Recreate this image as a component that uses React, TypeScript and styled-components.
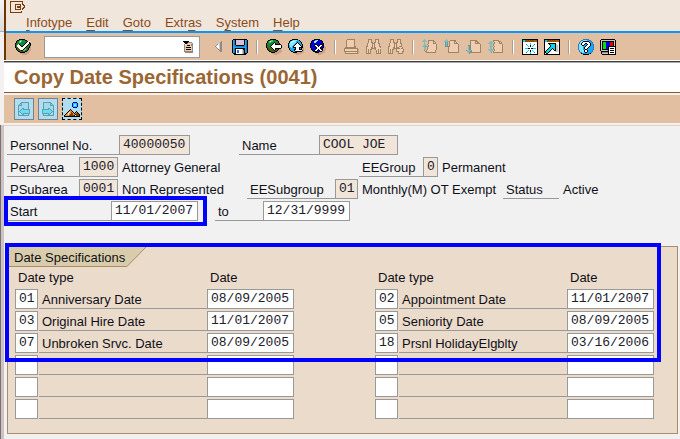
import React from 'react';
import styled, { createGlobalStyle } from 'styled-components';

const sans = '"Liberation Sans", Arial, sans-serif';
const mono = '"Liberation Mono", "Courier New", monospace';

const Global = createGlobalStyle`
  *, *::before, *::after { box-sizing: border-box; }
  body { margin: 0; background: #f1f1f1; font: 13px/20px ${sans}; color: #101018; }
  button, input { font: inherit; color: inherit; margin: 0; padding: 0; border: 0; border-radius: 0; background: none; }
`;

/* ---------- pixel icons ---------- */

const palette: Record<string, string> = {
  k: '#000000', w: '#ffffff', G: '#108838', L: '#4cc468', D: '#4a5a10', s: '#cf9f8c',
  b: '#0000d8', c: '#18a8f0', a: '#80e8ff', B: '#2878c8', p: '#d8c0d8', g: '#8c8c8c',
  l: '#c8c8c8', o: '#9c8562', f: '#f0cdb2', t: '#86bdb8', T: '#5c9ca0', n: '#a85c00',
  r: '#e80000', e: '#00e000', C: '#00d8f0', m: '#f09030', h: '#5ca0b4', i: '#a5d9e8',
  j: '#68dcf0', '#': '#7a3f08', M: '#804000',
};

const art = {
  system: [
    '#############..',
    '#...........#..',
    '#...........#..',
    '#....######.##.',
    '#....#....#..##',
    '#....#.####...#',
    '#....#.####..##',
    '#....#....#.##.',
    '#....######.#..',
    '#..............',
    '#..........#...',
    '############...',
  ],
  check: [
    '....kkkkkk......',
    '..kkGLLGGGkk....',
    '.kDGLwLGGGGGkww.',
    '.kGGLLGGGGGkwwk.',
    'kDGGGGGGGGkwwwkk',
    'kGGwkGGGGkwwwkGk',
    'kGwwwkGGkwwwkGDk',
    'kDwwwwkkwwwkGGks',
    'kDDwwwwwwwkGDDks',
    '.kDDwwwwwkLGDkss',
    '.kDDDwwwkLLGDkss',
    '..kDDDkkLLGDksss',
    '...kkDDDDDkksss.',
    '....skkkkkssss..',
    '.....sssssssss..',
    '.......sssss....',
  ],
  list: [
    'kkkkkk....',
    '.kkkkoooo.',
    '..kkoffffg',
    '.o.fffffog',
    '.offkkkfog',
    '.offfffffg',
    '.ofkkkkkfg',
    '.offfffffg',
    '.ofkkkkkfg',
    '.offfffffg',
    '.oooooooog',
    '..gggggggg',
  ],
  left: [
    '......lg',
    '.....lgg',
    '....llgg',
    '...gwlgg',
    '..gwwlgg',
    '.gwwwlgg',
    '..gwwlgg',
    '...gwlgg',
    '....glgg',
    '.....ggg',
    '......gg',
  ],
  save: [
    '.kkkkkkkkkkkkkk.',
    'kcBkppppppppkcBk',
    'kcBkppppppppkcBk',
    'kcBkppppppppkcBk',
    'kcBkppppppppkcBk',
    'kcBkppppppppkcBk',
    'kcBBkkkkkkkkBcBk',
    'kccBBBBBBBBBBcBk',
    'kcccccccccccccBk',
    'kcBkkkkkkkkkkcBk',
    'kcBkwwwwwwlkkcBk',
    'kcBkwBBwwwlgkcBk',
    'kcBkwBBwwwlgkcBk',
    'kcBkwBBwwwlgkcBk',
    '.kkkwwwwwwlgkkk.',
    '..kkkkkkkkkkkk..',
  ],
  back: [
    '....kkkkkk......',
    '..kkGLLGGGkk....',
    '.kGLwLLGGGDGk...',
    '.kGLLGGGkGGDk...',
    'kGGGGGGkwkGDDk..',
    'kGGGGGkwwkkkkkk.',
    'kDGGGkwwwwwwwwwk',
    'kDDGkwwwwwwwwwwk',
    'kDDGGkwwwwwwwwwk',
    '.kDDDGkwwkkkkkks',
    '.kDDDDGkwkDDkss.',
    '..kDDDDDkDDkssss',
    '...kkDDDDkksssss',
    '.....kkkkssssss.',
    '......sssssss...',
    '........sss.....',
  ],
  up: [
    '....kkkkkk......',
    '..kkcaaaacck....',
    '.kcawwaacccck...',
    '.kawaaaackccck..',
    'kcaaaaackwkcck..',
    'kaaaaackwwwkcck.',
    'kcaaackwwwwwkck.',
    'kcaackwwwwwwwkk.',
    'kccackkkwwwkkkks',
    '.kccccckwwwkckss',
    '.kcccckkwwwkkkss',
    '..kccckwwwwwwwks',
    '...kkcckkkkkkkss',
    '.....kkkksssssss',
    '......ssssssss..',
    '........sss.....',
  ],
  cancel: [
    '....kkkkkk......',
    '..kkbcaabbkk....',
    '.kbbawabbbbbk...',
    '.kbbaabbbbbbk...',
    'kbbbbbbbbbbbbk..',
    'kbbbbkkbbbkkbk..',
    'kbbbkwwkbkwwkk..',
    'kbbbbkwwkwwkbks.',
    'kbbbbbkwwwkbbkss',
    '.kbbbbkwwwkbksss',
    '.kbbbkwwkwwkksss',
    '..kbkwwkbkwwkss.',
    '...kkkkbbkkksss.',
    '.....kkkkssssss.',
    '......sssssss...',
    '........sss.....',
  ],
  print: [
    '...oooooooo.....',
    '..offfffffo.....',
    '..offfffffo.....',
    '..offfffffo.....',
    '..offfffffo.....',
    '..offfffffo.....',
    '..offfffffo.....',
    '..offfffffoo....',
    '.ooooooooooo....',
    'oooooooooooooo..',
    'offffffffffffos.',
    'offffffffffffos.',
    'oooooooooooooos.',
    '.offfffffffffos.',
    '.ooooooooooooos.',
    '................',
  ],
  find: [
    '..oooo...oooo...',
    '..offo...offo...',
    '..offo...offo...',
    '..offoo.ooffo...',
    '.offffooofffoo..',
    '.offffofoffffo..',
    '.offffofoffffo..',
    'ooffffofoffffoo.',
    'offffoofooffffo.',
    'offffooooofffff.',
    'ofofoo...offofo.',
    'ofofo.....ofofo.',
    'ofofo.....ofofo.',
    'ofofo.....ofofo.',
    'ooooo.....ooooo.',
    '................',
  ],
  findNext: [
    '..oooo...oooo...',
    '..offo...offo...',
    '..offo...offo...',
    '..offoo.ooffo...',
    '.offffooofffoo..',
    '.offffofoffffo..',
    '.offffofoffffo..',
    'ooffffofoffooo..',
    'offffoofooofffo.',
    'offffooooooofoo.',
    'ofofoo..offffffo',
    'ofofo...offffffo',
    'ofofo...ooofffoo',
    'ofofo.....offfo.',
    'ooooo.....ooooo.',
    '................',
  ],
  first: [
    '..t.............',
    '.ttt..oooooo....',
    'ttttt.offffoo...',
    '..t...offffofo..',
    '..t...offffooo..',
    '..tt.offffffffo.',
    '.tttt.offfffffo.',
    'tttTttofffffffo.',
    '..tt.offffffffo.',
    '..tt.offffffffo.',
    '..tt.offffffffo.',
    '..ofoffffffffo..',
    '...ooffffffffo..',
    '....oooooooooo..',
    '................',
    '................',
  ],
  previous: [
    '..t.............',
    '.ttt..oooooo....',
    'tttttoffffoo....',
    '.TtT.offffofo...',
    '.TtT.offffoooo..',
    '.TtT.offffffffo.',
    '.TtT.offffffffo.',
    '.TTTooffffffffo.',
    '....offfffffffo.',
    '....offfffffffo.',
    '....offfffffffo.',
    '....offfffffffo.',
    '....offfffffffo.',
    '....ooooooooooo.',
    '................',
    '................',
  ],
  next: [
    '................',
    '....ooooooo.....',
    '....offffooo....',
    '....offffofoo...',
    '....offffooooo..',
    '....offfffffffo.',
    '..TTofffffffffo.',
    '..tTofffffffffo.',
    '..tTofffffffffo.',
    '..tTofffffffffo.',
    '..tTofffffffffo.',
    'TttttTffffffffo.',
    '.tttToffffffffo.',
    '..tTooooooooooo.',
    '...T............',
    '................',
  ],
  last: [
    '................',
    '.....oooooo.....',
    '..tt.offffooo...',
    '.tttt.offffofo..',
    'ttttttoffffooo..',
    '..tt.offffffffo.',
    '..tt.offffffffo.',
    '.tttt.offfffffo.',
    '..tt.offffffffo.',
    '..tt.offffffffo.',
    'ttttttofffffffo.',
    '.tttt.offfffffo.',
    '..tt.offffffffo.',
    '...T.oooooooooo.',
    '................',
    '................',
  ],
  session: [
    'kkkkkkkkkkkkkkkk',
    'kCCnMnMnMnMnnnnk',
    'kCCMnMnMnMnMnnnk',
    'kwwwwwwwwwwwwwwk',
    'kwwwwwwwCwwwwwwk',
    'kwwwBwwwCwwwBwwk',
    'kwwwwCwwkwwCwwwk',
    'kwwwwwCwkwCwwwwk',
    'kwwwwwwwwwwwwwwk',
    'kwwCCCkkwkkCCCwk',
    'kwwwwwwwwwwwwwwk',
    'kwwwwwCwkwCwwwwk',
    'kwwwwCwwkwwCwwwk',
    'kwwwBwwwCwwwBwwk',
    'kwwwwwwwCwwwwwwk',
    'kkkkkkkkkkkkkkkk',
  ],
  shortcut: [
    'kkkkkkkkkkkkkkkk',
    'kCCnMnMnMnMnnnnk',
    'kCCMnMnMnMnMnnnk',
    'kwwwwwwwwwwwwwwk',
    'kwwwkkkkkkkkwwwk',
    'kwwwwkCCCCCklwwk',
    'kwwwwwkCCCCkllwk',
    'kwwwwwkCCCCkllwk',
    'kwwwwkCCCCCkllwk',
    'kwwwkCCCkCCkllwk',
    'kwwkCCCkwkCkllwk',
    'kwkCCCkwwwkkllwk',
    'kkCCCklwwwwlllwk',
    'kkCCklwwwwwwwwwk',
    'kwkkwwwwwwwwwwwk',
    'kkkkkkkkkkkkkkkk',
  ],
  help: [
    '.....BBBBBB.....',
    '...BBaaaaccBB...',
    '..BaakkkkkkccB..',
    '.BaakwwwwwwkccB.',
    '.BakwwwkkwwwkcB.',
    'BaakwwkcckwwkccB',
    'BaaakkcckwwwkccB',
    'BaaaacckwwwkcccB',
    'BaaaackwwwkccccB',
    'BaaaackwwkcccccB',
    'BaaaacckkccccccB',
    '.BaaaakwwkccccB.',
    '.BaaaakwwkccccB.',
    '..BBaackkccccB..',
    '...kBBccccBBk...',
    '.....kkkkkk.....',
  ],
  layout: [
    '.kkkkkkkkkkkkkk.',
    'kllllllllllllllk',
    'klkkkkkkkkkkkklk',
    'klkeeebbbbrrrklk',
    'klkeeebbbbrrrklk',
    'klkeeebbbbrrrklk',
    'klkeeebbbbrrrklk',
    'klkeeebbkkkkkkkk',
    'klkeeebbkwwwwwwk',
    'klkeeebbkwkkkkwk',
    'klkkkkkkkwwwwwwk',
    'kllllllgkwkkkkwk',
    '.kkkkkkkkwwwwwwk',
    '.kggggggkwkkkkwk',
    '.kllllllkwwwwwwk',
    '..kkkkkkkkkkkkkk',
  ],
  pageBack: [
    '...hhhhhhhh.',
    '..hhiiiiiih.',
    '.hihiiiiiih.',
    'hhhhiiiiiih.',
    'hiiiiiiiiih.',
    'hiiiiiiiiih.',
    'hiiihhiiiih.',
    'hiihjhhhhhhh',
    'hihjjjjjjjjh',
    'hhjjjjjjjjjh',
    'hihjjjjjjjjh',
    'hiihjhhhhhhh',
    'hiiihhiiiih.',
    'hhhhhhhhhhh.',
  ],
  pageNext: [
    '.hhhhhhhh...',
    '.hiiiiiihh..',
    '.hiiiiiihih.',
    '.hiiiiiihhhh',
    '.hiiiiiiiiih',
    '.hiiiiiiiiih',
    '.hiiiihhiiih',
    'hhhhhhhjhiih',
    'hjjjjjjjjhih',
    'hjjjjjjjjjhh',
    'hjjjjjjjjhih',
    'hhhhhhhjhiih',
    '.hiiiihhiiih',
    '.hhhhhhhhhhh',
  ],
  overview: [
    '.........kbbk...',
    '........bCCCCb..',
    '........bCaaCb..',
    '........bCaaCb..',
    '........bCCCCb..',
    '.........kbbk...',
    '................',
    '......k.........',
    '.....kmk........',
    '....kmmmk...k...',
    '...kmwmMmk.kmk..',
    '..kmwmmMMmkmMMk.',
    '.kmmwmMMMmmkMMMk',
    'kmmmmMMMMMkwMMMk',
    'kkkkkkkkkkkkkkkk',
  ],
};

type IconName = keyof typeof art;

const IconSvg = styled.svg`
  display: block;
  flex: none;
  overflow: visible;
`;

function Icon({ name }: { name: IconName }) {
  const rows = art[name];
  const cells: React.ReactElement[] = [];
  rows.forEach((row, y) => {
    let x = 0;
    while (x < row.length) {
      const ch = row[x];
      let end = x + 1;
      while (end < row.length && row[end] === ch) end++;
      if (ch !== '.') {
        cells.push(<rect key={`${x}-${y}`} x={x} y={y} width={end - x} height={1} fill={palette[ch]} />);
      }
      x = end;
    }
  });
  const width = Math.max(...rows.map((row) => row.length));
  return (
    <IconSvg width={width} height={rows.length} viewBox={`0 0 ${width} ${rows.length}`} shapeRendering="crispEdges" aria-hidden="true">
      {cells}
    </IconSvg>
  );
}

/* ---------- window frame ---------- */

const Page = styled.div`
  display: grid;
  grid-template-columns: 4px minmax(0, 1fr);
  min-height: 100vh;
`;

const Edge = styled.div`
  display: flex;
  flex-direction: column;
`;

const EdgeTop = styled.div`
  height: 32px;
  background: linear-gradient(#f4f4f4, #dcdcdc);
  border-bottom: 1px solid #b4b0b0;
`;

const EdgeMiddle = styled.div`
  height: 93px;
  background: #f4f0f0;
`;

const EdgeBottom = styled.div`
  flex: 1;
  background: #cfc2c2;
  border-left: 1px solid #787070;
`;

const Window = styled.div`
  min-width: 0;
`;

const Chrome = styled.header`
  border-left: 2px solid #6b3600;
`;

const MenuArea = styled.div`
  background: #f1e6db;
  border-bottom: 2px solid #0a98f8;
  padding: 1px 4px 0;
`;

const SystemButton = styled.button`
  display: block;
  height: 12px;
`;

const MenuBar = styled.nav`
  display: flex;
  gap: 14px;
  padding: 0 16px;
  height: 18px;
`;

const MenuButton = styled.button`
  color: #8a4b1c;
  line-height: 20px;
`;

const Accel = styled.u`
  text-underline-offset: 3px;
  text-decoration-thickness: 1px;
  text-decoration-skip-ink: none;
`;

const Toolbar = styled.div`
  display: flex;
  align-items: center;
  gap: 6px;
  height: 27px;
  padding: 0 9px;
  background: #e2bfa1;
`;

const ToolButton = styled.button`
  display: flex;
  align-items: center;
  justify-content: center;
  flex: none;
  width: 16px;
  height: 16px;
`;

const CommandBox = styled.div`
  display: flex;
  align-items: center;
  width: 156px;
  height: 22px;
  margin: 0 4px 0 7px;
  padding-right: 3px;
  background: #fff;
  border: 1px solid #999;
`;

const CommandInput = styled.input`
  flex: 1;
  min-width: 0;
  padding: 0 4px;
  outline: 0;
`;

const Separator = styled.span`
  flex: none;
  width: 2px;
  height: 14px;
  margin: 0 2px;
  background: #a89c94;
  border-right: 1px solid #fff;
`;

const TitleBar = styled.div`
  padding: 2px 10px;
  background: #fff;
  border-top: 1px solid #404040;
  border-bottom: 1px solid #8a5a28;
  box-shadow: inset 0 1px #a8a8a8, 0 -1px #fff;
  margin-top: 1px;
`;

const Title = styled.h1`
  margin: 0;
  font-size: 20px;
  line-height: 26px;
  color: #9a6633;
`;

const ActionBar = styled.div`
  display: flex;
  gap: 4px;
  margin: 2px 0;
  padding: 3px 10px;
  background: #e2bfa1;
`;

const ActionButton = styled.button<{ $focused?: boolean }>`
  display: flex;
  align-items: center;
  justify-content: center;
  width: 20px;
  height: 22px;
  background: #b0def0;
  border: 1px ${(p) => (p.$focused ? 'dashed #000' : 'solid #73828c')};
`;

/* ---------- form ---------- */

const Content = styled.main`
  position: relative;
  padding: 9px 2px 5px 3px;
  border-top: 1px solid #e4d0c0;
`;

const Rows = styled.div`
  display: flex;
  flex-direction: column;
  gap: 2px;
`;

const Row = styled.div`
  display: flex;
  height: 20px;
  white-space: nowrap;
`;

const labelCss = `
  flex: none;
  padding-left: 3px;
  border-bottom: 1px solid #999;
  line-height: 21px;
`;

const Label = styled.label<{ $width: number; $gap?: number }>`
  ${labelCss}
  width: ${(p) => p.$width}px;
  margin-left: ${(p) => p.$gap || 0}px;
`;

const Caption = styled.span<{ $width: number }>`
  ${labelCss}
  width: ${(p) => p.$width}px;
`;

const Value = styled.span<{ $width?: number }>`
  flex: none;
  width: ${(p) => (p.$width ? `${p.$width}px` : 'auto')};
  padding-left: 4px;
  line-height: 21px;
`;

const Field = styled.input<{ $width: number }>`
  && {
    display: block;
    flex: none;
    width: ${(p) => p.$width}px;
    height: 20px;
    padding: 0 0 1px 3px;
    font: 13px/17px ${mono};
    color: #202028;
    background: #fff;
    border: 1px solid #999;
    outline: 0;
  }
  &&:read-only { background: #f1e5d9; }
`;

const Group = styled.section`
  margin-top: 25px;
  padding: 0 23px 14px 7px;
  background: #eadbcb;
  border: 1px solid #ac8c6c;
`;

const GroupTab = styled.div`
  position: relative;
  width: 138px;
  height: 20px;
  margin-left: -7px;
`;

const TabShape = styled.svg`
  position: absolute;
  inset: 0;
`;

const GroupTitle = styled.h2`
  position: relative;
  margin: 0;
  padding-left: 6px;
  font-size: 13px;
  font-weight: 400;
  line-height: 21px;
`;

const Columns = styled.div`
  display: flex;
  justify-content: space-between;
`;

const DateTable = styled.table`
  width: 279px;
  table-layout: fixed;
  border-collapse: collapse;

  th { height: 20px; padding: 1px 0 0 3px; font-weight: 400; line-height: 19px; text-align: left; vertical-align: bottom; }
  td { height: 22px; padding: 2px 0 0; }
`;

const Description = styled.span`
  display: block;
  height: 20px;
  padding-left: 3px;
  line-height: 21px;
  white-space: nowrap;
  border-bottom: 1px solid #999;
`;

const CodeCol = styled.col` width: 24px; `;
const DateCol = styled.col` width: 87px; `;

const Highlight = styled.div<{ $kind: 'start' | 'group' }>`
  position: absolute;
  border: 4px solid #0000ff;
  pointer-events: none;
  ${(p) =>
    p.$kind === 'start'
      ? 'left: 0; top: 70px; width: 203px; height: 30px;'
      : 'left: 1px; right: 19px; top: 117px; height: 119px;'}
`;

/* ---------- data ---------- */

const menus: [string, string, string][] = [
  ['', 'I', 'nfotype'],
  ['', 'E', 'dit'],
  ['', 'G', 'oto'],
  ['Extr', 'a', 's'],
  ['S', 'y', 'stem'],
  ['', 'H', 'elp'],
];

const tools: [IconName, string][][] = [
  [['save', 'Save']],
  [['back', 'Back'], ['up', 'Exit'], ['cancel', 'Cancel']],
  [['print', 'Print'], ['find', 'Find'], ['findNext', 'Find next']],
  [['first', 'First page'], ['previous', 'Previous page'], ['next', 'Next page'], ['last', 'Last page']],
  [['session', 'New session'], ['shortcut', 'Create shortcut']],
  [['help', 'Help'], ['layout', 'Customize layout']],
];

type DateRow = [string, string, string];
const blank: DateRow = ['', '', ''];

const leftDates: DateRow[] = [
  ['01', 'Anniversary Date', '08/09/2005'],
  ['03', 'Original Hire Date', '11/01/2007'],
  ['07', 'Unbroken Srvc. Date', '08/09/2005'],
  blank, blank, blank,
];

const rightDates: DateRow[] = [
  ['02', 'Appointment Date', '11/01/2007'],
  ['05', 'Seniority Date', '08/09/2005'],
  ['18', 'Prsnl HolidayElgblty', '03/16/2006'],
  blank, blank, blank,
];

function Dates({ rows }: { rows: DateRow[] }) {
  return (
    <DateTable>
      <colgroup><CodeCol /><col /><DateCol /></colgroup>
      <thead>
        <tr><th colSpan={2}>Date type</th><th>Date</th></tr>
      </thead>
      <tbody>
        {rows.map(([code, text, date], i) => (
          <tr key={i}>
            <td><Field $width={23} defaultValue={code} aria-label={`Date type ${text}`} /></td>
            <td><Description>{text}</Description></td>
            <td><Field $width={87} defaultValue={date} aria-label={`Date ${text}`} /></td>
          </tr>
        ))}
      </tbody>
    </DateTable>
  );
}

export default function App() {
  return (
    <>
      <Global />
      <Page>
        <Edge><EdgeTop /><EdgeMiddle /><EdgeBottom /></Edge>
        <Window>
          <Chrome>
            <MenuArea>
              <SystemButton aria-label="Session menu"><Icon name="system" /></SystemButton>
              <MenuBar>
                {menus.map(([before, key, after]) => (
                  <MenuButton key={after}>{before}<Accel>{key}</Accel>{after}</MenuButton>
                ))}
              </MenuBar>
            </MenuArea>
            <Toolbar>
              <ToolButton aria-label="Enter"><Icon name="check" /></ToolButton>
              <CommandBox>
                <CommandInput aria-label="Command" />
                <ToolButton aria-label="Command history"><Icon name="list" /></ToolButton>
              </CommandBox>
              <ToolButton aria-label="Collapse command field"><Icon name="left" /></ToolButton>
              {tools.map((group, i) => (
                <React.Fragment key={i}>
                  {i > 0 && <Separator />}
                  {group.map(([name, label]) => (
                    <ToolButton key={name} aria-label={label}><Icon name={name} /></ToolButton>
                  ))}
                </React.Fragment>
              ))}
            </Toolbar>
          </Chrome>
          <TitleBar><Title>Copy Date Specifications (0041)</Title></TitleBar>
          <ActionBar>
            <ActionButton aria-label="Previous record"><Icon name="pageBack" /></ActionButton>
            <ActionButton aria-label="Next record"><Icon name="pageNext" /></ActionButton>
            <ActionButton $focused aria-label="Overview"><Icon name="overview" /></ActionButton>
          </ActionBar>
          <Content>
            <Rows>
              <Row>
                <Label $width={112} htmlFor="pernr">Personnel No.</Label>
                <Field $width={71} id="pernr" readOnly value="40000050" />
                <Label $width={80} $gap={49} htmlFor="name">Name</Label>
                <Field $width={79} id="name" readOnly value="COOL JOE" />
              </Row>
              <Row>
                <Label $width={72} htmlFor="area">PersArea</Label>
                <Field $width={39} id="area" readOnly value="1000" />
                <Value $width={241}>Attorney General</Value>
                <Label $width={64} htmlFor="eegroup">EEGroup</Label>
                <Field $width={15} id="eegroup" readOnly value="0" />
                <Value>Permanent</Value>
              </Row>
              <Row>
                <Label $width={72} htmlFor="subarea">PSubarea</Label>
                <Field $width={39} id="subarea" readOnly value="0001" />
                <Value $width={129}>Non Represented</Value>
                <Label $width={88} htmlFor="eesub">EESubgroup</Label>
                <Field $width={23} id="eesub" readOnly value="01" />
                <Value $width={145}>Monthly(M) OT Exempt</Value>
                <Caption $width={56}>Status</Caption>
                <Value>Active</Value>
              </Row>
              <Row>
                <Label $width={104} htmlFor="start">Start</Label>
                <Field $width={87} id="start" defaultValue="11/01/2007" />
                <Label $width={48} $gap={17} htmlFor="end">to</Label>
                <Field $width={87} id="end" defaultValue="12/31/9999" />
              </Row>
            </Rows>
            <Group>
              <GroupTab>
                <TabShape width="138" height="20" viewBox="0 0 138 20" aria-hidden="true">
                  <path d="M0 0H138L119 19.5H0Z" fill="#d9ccaa" />
                  <path d="M0 19.5H119L138 0" fill="none" stroke="#ac8c6c" />
                </TabShape>
                <GroupTitle>Date Specifications</GroupTitle>
              </GroupTab>
              <Columns>
                <Dates rows={leftDates} />
                <Dates rows={rightDates} />
              </Columns>
            </Group>
            <Highlight $kind="start" />
            <Highlight $kind="group" />
          </Content>
        </Window>
      </Page>
    </>
  );
}
